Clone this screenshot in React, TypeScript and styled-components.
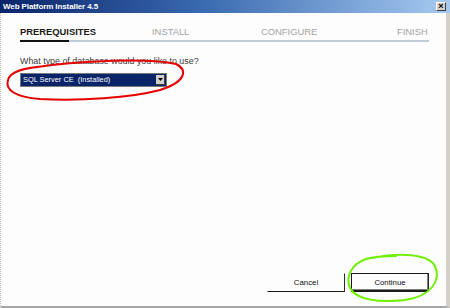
import React from "react";
import styled, { createGlobalStyle } from "styled-components";

const GlobalStyle = createGlobalStyle`
  html, body {
    margin: 0;
    padding: 0;
    background: #ffffff;
  }
`;

const steps = ["PREREQUISITES", "INSTALL", "CONFIGURE", "FINISH"];

function App() {
  return (
    <>
      <GlobalStyle />
      <Window>
        <TitleBar>
          <TitleText>Web Platform Installer 4.5</TitleText>
          <CloseButton>×</CloseButton>
        </TitleBar>
        <Body>
          <Steps>
            {steps.map((s, i) => (
              <Step key={s} active={i === 0}>
                {s}
              </Step>
            ))}
          </Steps>
          <Track>
            <TrackActive />
          </Track>
          <Question>What type of database would you like to use?</Question>
          <Select>
            <SelectValue>SQL Server CE&nbsp; (Installed)</SelectValue>
            <SelectArrow>
              <svg width="5" height="3" viewBox="0 0 5 3">
                <path d="M0 0 H5 L2.5 3 Z" fill="#000" />
              </svg>
            </SelectArrow>
          </Select>
          <Footer>
            <Button>Cancel</Button>
            <Button primary>Continue</Button>
          </Footer>
        </Body>
        <Marks width="450" height="308" viewBox="0 0 450 308">
          <path
            d="M 30 68 C 80 60 150 58 176 64 C 188 70 186 82 160 90 C 130 98 80 101 40 99 C 15 97 5 90 8 80 C 10 72 22 68 45 66"
            fill="none"
            stroke="#e80000"
            strokeWidth="2"
            strokeLinecap="round"
          />
          <path
            d="M 372 258 C 400 252 428 254 435 266 C 441 280 432 296 405 300 C 380 303 356 300 350 288 C 345 276 352 264 366 259 C 376 256 388 256 396 256"
            fill="none"
            stroke="#6ef000"
            strokeWidth="2"
            strokeLinecap="round"
          />
        </Marks>
      </Window>
    </>
  );
}

const Window = styled.div`
  position: relative;
  width: 450px;
  height: 308px;
  display: flex;
  flex-direction: column;
  background: #fdfdfd;
  font-family: "Liberation Sans", Arial, sans-serif;
  overflow: hidden;
`;

const TitleBar = styled.div`
  height: 13px;
  flex: none;
  display: flex;
  align-items: center;
  justify-content: space-between;
  padding: 0 3px 0 3px;
  background: linear-gradient(to right, #0a246a 0%, #3a6ab0 45%, #a6caf0 100%);
`;

const TitleText = styled.span`
  color: #ffffff;
  font-weight: 700;
  font-size: 8px;
  letter-spacing: -0.1px;
  line-height: 13px;
`;

const CloseButton = styled.span`
  width: 10px;
  height: 9px;
  margin-right: 1px;
  display: flex;
  align-items: center;
  justify-content: center;
  background: #d4d0c8;
  border-top: 1px solid #ffffff;
  border-left: 1px solid #ffffff;
  border-right: 1px solid #404040;
  border-bottom: 1px solid #404040;
  box-sizing: border-box;
  color: #000;
  font-size: 9px;
  font-weight: 700;
  line-height: 1;
`;

const Body = styled.div`
  flex: 1;
  display: flex;
  flex-direction: column;
  padding: 13px 17px 14px 19px;
  border-left: 1px dotted #c8beb0;
  border-right: 4px solid #d4d0c8;
  border-bottom: 2px solid #a8a8a8;
`;

const Steps = styled.div`
  display: grid;
  grid-template-columns: 132px 109px 136px auto;
  width: 409px;
`;

const Step = styled.span<{ active?: boolean }>`
  font-size: 9.4px;
  line-height: 12px;
  font-weight: ${({ active }) => (active ? 700 : 400)};
  color: ${({ active }) => (active ? "#1a1a1a" : "#a3a3a3")};
`;

const Track = styled.div`
  margin-top: 2px;
  width: 409px;
  height: 2px;
  background: #c2ccd8;
  display: flex;
`;

const TrackActive = styled.div`
  width: 49px;
  height: 2px;
  background: #111111;
`;

const Question = styled.div`
  margin-top: 14px;
  font-size: 8.9px;
  line-height: 11px;
  color: #3c3c3c;
`;

const Select = styled.div`
  margin-top: 6px;
  width: 147px;
  height: 14px;
  box-sizing: border-box;
  display: flex;
  align-items: stretch;
  border: 1px solid #7a7a7a;
  background: #0a246a;
  padding: 1px;
`;

const SelectValue = styled.span`
  flex: 1;
  color: #ffffff;
  font-size: 7.4px;
  line-height: 10px;
  padding-left: 1px;
`;

const SelectArrow = styled.span`
  width: 9px;
  display: flex;
  align-items: center;
  justify-content: center;
  background: #d4d0c8;
  box-sizing: border-box;
  border-right: 1px solid #404040;
  border-bottom: 1px solid #404040;
`;

const Footer = styled.div`
  margin-top: auto;
  display: flex;
  justify-content: flex-end;
  gap: 6px;
`;

const Button = styled.div<{ primary?: boolean }>`
  width: 78px;
  height: 19px;
  box-sizing: border-box;
  display: flex;
  align-items: center;
  justify-content: center;
  font-size: 7.8px;
  color: #111111;
  background: #fdfdfd;
  border: 1px solid
    ${({ primary }) => (primary ? "#1a1a1a" : "transparent")};
  border-right: 1px solid #2a2a2a;
  border-bottom: ${({ primary }) => (primary ? 2 : 1)}px solid #1a1a1a;
  box-shadow: ${({ primary }) =>
    primary ? "inset -1px -1px 0 #808080" : "none"};
`;

const Marks = styled.svg`
  position: absolute;
  left: 0;
  top: 0;
  pointer-events: none;
`;

export default App;
